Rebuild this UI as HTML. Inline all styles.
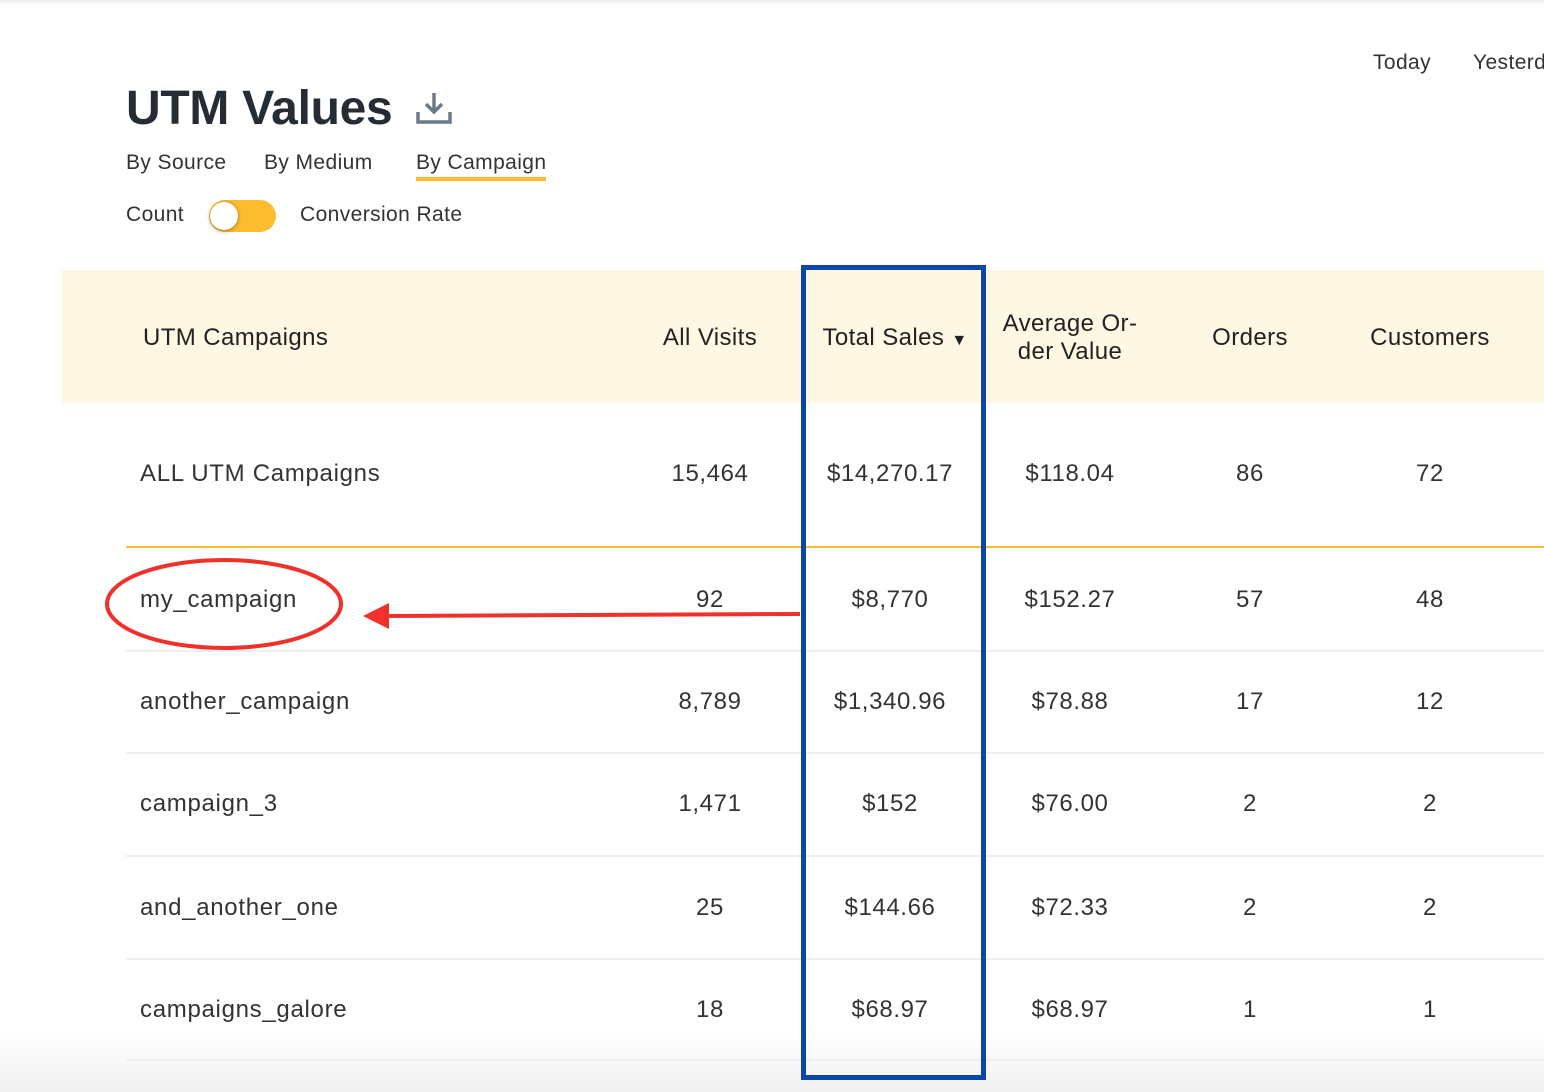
<!DOCTYPE html>
<html><head><meta charset="utf-8"><style>
body{margin:0;width:1544px;height:1092px;overflow:hidden;background:#fff;font-family:"Liberation Sans",sans-serif;position:relative;color:#222}
.a{position:absolute;white-space:nowrap}
.c{position:absolute;transform:translateX(-50%);white-space:nowrap;font-size:24px;color:#333;letter-spacing:0.6px}
.h{font-size:24px;color:#222;letter-spacing:0.4px}
.d{font-size:24px;color:#333;letter-spacing:0.7px}
.t{font-size:21px;color:#333;letter-spacing:0.4px}
.sep{position:absolute;left:126px;right:0;height:2px;background:#eee}
</style></head><body>
<div style="position:absolute;left:0;right:0;top:0;height:6px;background:linear-gradient(#eee,#fff)"></div>
<div style="position:absolute;left:0;right:0;bottom:0;height:60px;background:linear-gradient(#fff,#f0f0f0)"></div>
<div class="a t" style="left:1373px;top:51px">Today</div>
<div class="a t" style="left:1473px;top:51px">Yesterday</div>
<div class="a" style="left:126px;top:81px;font-size:48px;font-weight:bold;color:#262c33;letter-spacing:-0.3px">UTM Values</div>
<svg class="a" style="left:416px;top:90px" width="36" height="36" viewBox="0 0 36 36"><path d="M18 3v19M10 14l8 8 8-8" stroke="#6b7a8a" stroke-width="3.5" fill="none"/><path d="M2 22v10h32V22" stroke="#6b7a8a" stroke-width="3.5" fill="none"/></svg>
<div class="a t" style="left:126px;top:151px">By Source</div>
<div class="a t" style="left:264px;top:151px">By Medium</div>
<div class="a t" style="left:416px;top:151px">By Campaign</div>
<div class="a" style="left:416px;top:177px;width:130px;height:4px;background:#fbbd2e"></div>
<div class="a t" style="left:126px;top:203px">Count</div>
<div class="a" style="left:209px;top:200px;width:67px;height:32px;border-radius:16px;background:#fbbd2e"></div>
<div class="a" style="left:210px;top:202px;width:28px;height:28px;border-radius:50%;background:#fff;box-shadow:0 1px 4px rgba(0,0,0,.4)"></div>
<div class="a t" style="left:300px;top:203px">Conversion Rate</div>
<div class="a" style="left:62px;top:270px;right:0;height:133px;background:#fef7e4"></div>
<div class="a h" style="left:143px;top:324px">UTM Campaigns</div>
<div class="c h" style="left:710px;top:324px">All Visits</div>
<div class="c h" style="left:895px;top:324px">Total Sales <span style="font-size:16px">▼</span></div>
<div class="c h" style="left:1070px;top:310px;text-align:center;line-height:28px">Average Or-<br>der Value</div>
<div class="c h" style="left:1250px;top:324px">Orders</div>
<div class="c h" style="left:1430px;top:324px">Customers</div>
<div class="a" style="left:126px;right:0;top:546px;height:2px;background:#fbbd2e"></div>
<div class="sep" style="top:650px"></div><div class="sep" style="top:752px"></div><div class="sep" style="top:855px"></div><div class="sep" style="top:958px"></div><div class="sep" style="top:1059px"></div>
<div class="a d" style="left:140px;top:460px">ALL UTM Campaigns</div>
<div class="c" style="left:710px;top:460px">15,464</div><div class="c" style="left:890px;top:460px">$14,270.17</div><div class="c" style="left:1070px;top:460px">$118.04</div><div class="c" style="left:1250px;top:460px">86</div><div class="c" style="left:1430px;top:460px">72</div>
<div class="a d" style="left:140px;top:586px">my_campaign</div>
<div class="c" style="left:710px;top:586px">92</div><div class="c" style="left:890px;top:586px">$8,770</div><div class="c" style="left:1070px;top:586px">$152.27</div><div class="c" style="left:1250px;top:586px">57</div><div class="c" style="left:1430px;top:586px">48</div>
<div class="a d" style="left:140px;top:688px">another_campaign</div>
<div class="c" style="left:710px;top:688px">8,789</div><div class="c" style="left:890px;top:688px">$1,340.96</div><div class="c" style="left:1070px;top:688px">$78.88</div><div class="c" style="left:1250px;top:688px">17</div><div class="c" style="left:1430px;top:688px">12</div>
<div class="a d" style="left:140px;top:790px">campaign_3</div>
<div class="c" style="left:710px;top:790px">1,471</div><div class="c" style="left:890px;top:790px">$152</div><div class="c" style="left:1070px;top:790px">$76.00</div><div class="c" style="left:1250px;top:790px">2</div><div class="c" style="left:1430px;top:790px">2</div>
<div class="a d" style="left:140px;top:894px">and_another_one</div>
<div class="c" style="left:710px;top:894px">25</div><div class="c" style="left:890px;top:894px">$144.66</div><div class="c" style="left:1070px;top:894px">$72.33</div><div class="c" style="left:1250px;top:894px">2</div><div class="c" style="left:1430px;top:894px">2</div>
<div class="a d" style="left:140px;top:996px">campaigns_galore</div>
<div class="c" style="left:710px;top:996px">18</div><div class="c" style="left:890px;top:996px">$68.97</div><div class="c" style="left:1070px;top:996px">$68.97</div><div class="c" style="left:1250px;top:996px">1</div><div class="c" style="left:1430px;top:996px">1</div>
<div class="a" style="left:801px;top:265px;width:175px;height:805px;border:5px solid #0b47a8"></div>
<svg class="a" style="left:0;top:0" width="1544" height="1092"><ellipse cx="224" cy="604" rx="117" ry="44" fill="none" stroke="#f0302a" stroke-width="4"/><path d="M800 614L385 616" stroke="#f0302a" stroke-width="4"/><path d="M363 616l26-13v26z" fill="#f0302a"/></svg>
</body></html>
